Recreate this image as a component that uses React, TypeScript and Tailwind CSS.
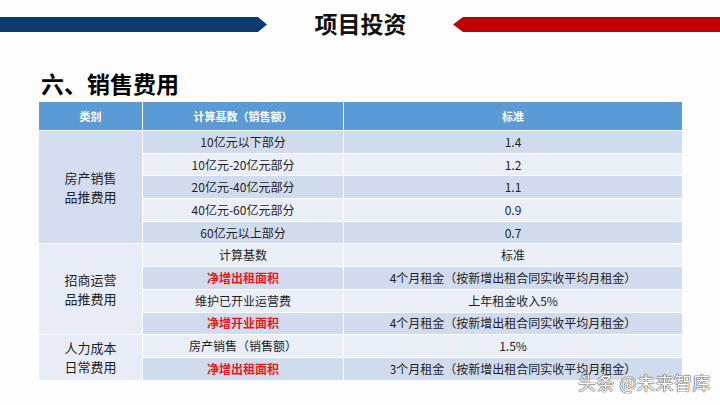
const font = { fontFamily: '"Noto Sans CJK SC", "Noto Sans", sans-serif' };

type Row = { base: string; std: string; red?: boolean };

const groups: { name: string[]; bg: string; rows: Row[] }[] = [
  {
    name: ["房产销售", "品推费用"],
    bg: "bg-[#d3ddef]",
    rows: [
      { base: "10亿元以下部分", std: "1.4" },
      { base: "10亿元-20亿元部分", std: "1.2" },
      { base: "20亿元-40亿元部分", std: "1.1" },
      { base: "40亿元-60亿元部分", std: "0.9" },
      { base: "60亿元以上部分", std: "0.7" },
    ],
  },
  {
    name: ["招商运营", "品推费用"],
    bg: "bg-[#e7ecf6]",
    rows: [
      { base: "计算基数", std: "标准" },
      { base: "净增出租面积", std: "4个月租金（按新增出租合同实收平均月租金）", red: true },
      { base: "维护已开业运营费", std: "上年租金收入5%" },
      { base: "净增开业面积", std: "4个月租金（按新增出租合同实收平均月租金）", red: true },
    ],
  },
  {
    name: ["人力成本", "日常费用"],
    bg: "bg-[#e7ecf6]",
    rows: [
      { base: "房产销售（销售额）", std: "1.5%" },
      { base: "净增出租面积", std: "3个月租金（按新增出租合同实收平均月租金）", red: true },
    ],
  },
];

const spans = ["row-span-5", "row-span-4", "row-span-2"];

export default function App() {
  let idx = 0;
  return (
    <div className="relative w-[720px] h-[405px] bg-[#fdfdfd] overflow-hidden text-[#1f1f1f]" style={font}>
      <div className="flex items-center h-[49px]">
        <svg width="268" height="15" viewBox="0 0 268 15">
          <polygon points="0,0 258,0 267,7.5 258,15 0,15" fill="#0e3a74" />
        </svg>
        <div className="flex-1 text-center text-[23px] font-bold leading-none text-[#111] pb-[2px]">项目投资</div>
        <svg width="267" height="15" viewBox="0 0 267 15">
          <polygon points="10,0 267,0 267,15 10,15 0,7.5" fill="#c00000" />
        </svg>
      </div>

      <h1 className="ml-[41px] mt-[19px] text-[23px] font-bold leading-[30px] text-black">六、销售费用</h1>

      <div className="ml-[39px] mt-[4px] w-[643px] grid grid-cols-[103px_200px_1fr] grid-rows-[28px_repeat(11,21.7px)] gap-x-[1px] gap-y-px bg-white text-[12px]">
        <div className="bg-[#5b9bd5] text-white font-bold text-[11px] flex items-center justify-center">类别</div>
        <div className="bg-[#5b9bd5] text-white font-bold text-[11px] flex items-center justify-center">计算基数（销售额）</div>
        <div className="bg-[#5b9bd5] text-white font-bold text-[11px] flex items-center justify-center">标准</div>
        {groups.map((g, gi) => {
          const cells = [
            <div
              key={`c${gi}`}
              className={`${spans[gi]} ${g.bg} flex flex-col items-center justify-center text-[13px] leading-[19px]`}
            >
              {g.name.map((n) => (
                <span key={n}>{n}</span>
              ))}
            </div>,
          ];
          g.rows.forEach((r, ri) => {
            const dark = idx % 2 === 0;
            idx++;
            const bg = dark ? "bg-[#d0dbee]" : "bg-[#e9eef7]";
            cells.push(
              <div
                key={`b${gi}-${ri}`}
                className={`${bg} flex items-center justify-center ${r.red ? "text-[#f01414] font-bold" : ""}`}
              >
                {r.base}
              </div>,
              <div key={`s${gi}-${ri}`} className={`${bg} flex items-center justify-center`}>
                {r.std}
              </div>
            );
          });
          return cells;
        })}
      </div>

      <div className="absolute left-[578px] top-[369px] text-[18px] text-white tracking-[0.5px] [text-shadow:0_0_1px_#444,0_0_1px_#444,0_0_1px_#444]">
        头条 @未来智库
      </div>
    </div>
  );
}
